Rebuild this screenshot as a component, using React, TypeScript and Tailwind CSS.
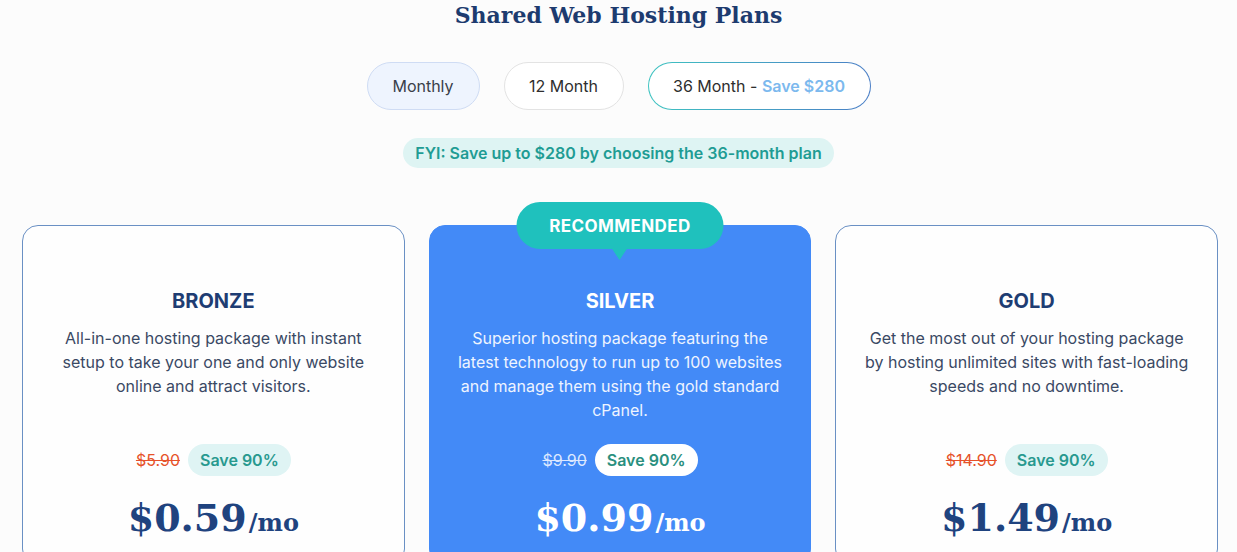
import React from "react";

const sans = { fontFamily: "Inter, 'Noto Sans', sans-serif" };
const serif = { fontFamily: "'DejaVu Serif', 'Liberation Serif', serif" };

type Plan = {
  name: string;
  desc: string;
  old: string;
  price: string;
  featured?: boolean;
};

const plans: Plan[] = [
  {
    name: "BRONZE",
    desc: "All-in-one hosting package with instant setup to take your one and only website online and attract visitors.",
    old: "$5.90",
    price: "$0.59",
  },
  {
    name: "SILVER",
    desc: "Superior hosting package featuring the latest technology to run up to 100 websites and manage them using the gold standard cPanel.",
    old: "$9.90",
    price: "$0.99",
    featured: true,
  },
  {
    name: "GOLD",
    desc: "Get the most out of your hosting package by hosting unlimited sites with fast-loading speeds and no downtime.",
    old: "$14.90",
    price: "$1.49",
  },
];

function Card({ p }: { p: Plan }) {
  const f = p.featured;
  return (
    <div className="relative">
      {f && (
        <div className="absolute left-1/2 -translate-x-1/2 -top-[23px] z-10 flex flex-col items-center">
          <div className="w-[207px] h-[47px] rounded-full bg-[#1fc1bd] flex items-center justify-center text-white text-[17px] font-bold tracking-[0.4px] pt-[3px]">
            RECOMMENDED
          </div>
          <div className="w-0 h-0 border-l-[8px] border-r-[8px] border-t-[12px] border-l-transparent border-r-transparent border-t-[#1fc1bd] -mt-px" />
        </div>
      )}
      <div
        className={
          "h-[340px] rounded-[16px] px-[26px] pt-[62px] flex flex-col items-center text-center " +
          (f ? "bg-[#438af7] border border-[#438af7]" : "bg-[#fefefe] border border-[#6a90c4]")
        }
      >
        <div className={"text-[20px] leading-[26px] font-bold " + (f ? "text-white" : "text-[#1e3d73]")}>
          {p.name}
        </div>
        <div className={"mt-[12px] min-h-[96px] text-[16px] leading-[24px] " + (f ? "text-[#eef4ff]" : "text-[#3a4964]")}>
          {p.desc}
        </div>
        <div className="mt-[22px] flex items-center gap-[8px]">
          <span className={"text-[16px] line-through " + (f ? "text-[#dce8ff]" : "text-[#e6522a]")}>{p.old}</span>
          <span
            className={
              "h-[32px] px-[12px] rounded-full flex items-center text-[16px] font-semibold " +
              (f ? "bg-white text-[#2a8f7e]" : "bg-[#dff4f4] text-[#28998f]")
            }
          >
            Save 90%
          </span>
        </div>
        <div className={"mt-[14px] flex items-baseline " + (f ? "text-white" : "text-[#1f437f]")} style={serif}>
          <span className="text-[38px] leading-[56px] font-bold">{p.price}</span>
          <span className="text-[24px] font-bold ml-[2px]">/mo</span>
        </div>
      </div>
    </div>
  );
}

export default function App() {
  return (
    <div className="w-[1237px] h-[552px] overflow-hidden bg-[#fcfcfc]" style={sans}>
      <div className="flex flex-col items-center">
        <h1 className="text-[22px] leading-[30px] font-bold text-[#1d3b6f]" style={serif}>
          Shared Web Hosting Plans
        </h1>
        <div className="mt-[32px] flex items-center gap-[24px]">
          <button className="h-[48px] w-[113px] rounded-full bg-[#eef4fe] border border-[#cfdcf4] text-[16px] text-[#3a3f4a]">
            Monthly
          </button>
          <button className="h-[48px] w-[120px] rounded-full bg-white border border-[#e3e3e3] text-[16px] text-[#2e2e2e]">
            12 Month
          </button>
          <div className="h-[48px] w-[223px] rounded-full p-px bg-gradient-to-r from-[#3dc3c0] to-[#4a7ec6]">
            <button className="h-full w-full rounded-full bg-white text-[16px] text-[#2e2e2e]">
              36 Month - <span className="font-semibold text-[#7cb9ee]">Save $280</span>
            </button>
          </div>
        </div>
        <div className="mt-[28px] h-[30px] px-[12px] rounded-full bg-[#def4f3] flex items-center text-[16px] font-semibold text-[#1f9c94]">
          FYI: Save up to $280 by choosing the 36-month plan
        </div>
      </div>
      <div className="mt-[57px] pl-[22px] pr-[19px] grid grid-cols-3 gap-[24px]">
        {plans.map((p) => (
          <Card key={p.name} p={p} />
        ))}
      </div>
    </div>
  );
}
